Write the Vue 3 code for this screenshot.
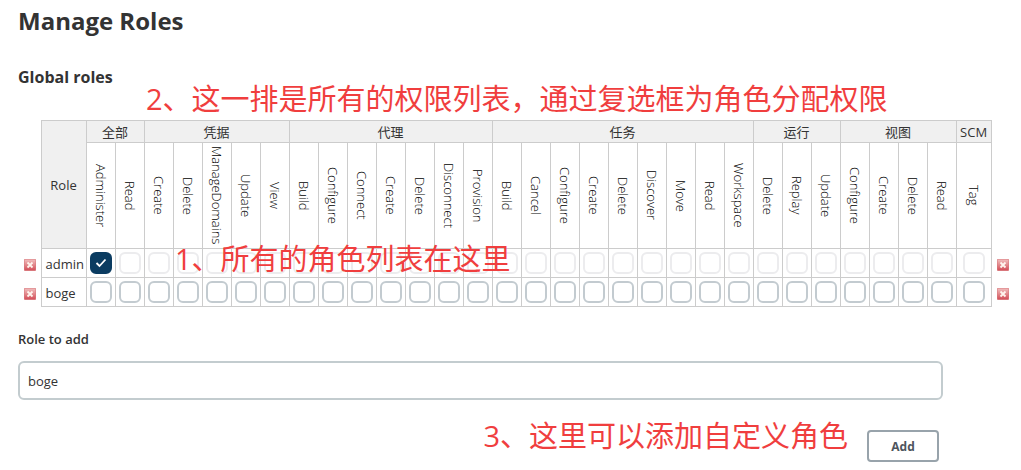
<script setup>
import { ref, reactive } from 'vue'

const groups = [
  { name: '全部', permissions: ['Administer', 'Read'] },
  { name: '凭据', permissions: ['Create', 'Delete', 'ManageDomains', 'Update', 'View'] },
  { name: '代理', permissions: ['Build', 'Configure', 'Connect', 'Create', 'Delete', 'Disconnect', 'Provision'] },
  { name: '任务', permissions: ['Build', 'Cancel', 'Configure', 'Create', 'Delete', 'Discover', 'Move', 'Read', 'Workspace'] },
  { name: '运行', permissions: ['Delete', 'Replay', 'Update'] },
  { name: '视图', permissions: ['Configure', 'Create', 'Delete', 'Read'] },
  { name: 'SCM', permissions: ['Tag'] },
]

const columns = groups.flatMap((g) =>
  g.permissions.map((p) => ({ key: g.name + '/' + p, label: p, wide: g.name === 'SCM' })),
)

const roles = reactive([
  { name: 'admin', granted: ['全部/Administer'] },
  { name: 'boge', granted: [] },
])

const newRole = ref('boge')

function implied(role, key) {
  return key !== '全部/Administer' && role.granted.includes('全部/Administer')
}

function removeRole(index) {
  roles.splice(index, 1)
}

function addRole() {
  const name = newRole.value.trim()
  if (name && !roles.some((r) => r.name === name)) roles.push({ name, granted: [] })
}
</script>

<template>
  <main class="page">
    <svg class="defs" width="0" height="0" aria-hidden="true">
      <defs>
        <linearGradient id="remove-fill" x1="0" y1="0" x2="0" y2="1">
          <stop offset="0" stop-color="#f0bcbc" />
          <stop offset="0.5" stop-color="#e28a8d" />
          <stop offset="1" stop-color="#d4505a" />
        </linearGradient>
        <symbol id="remove-icon" viewBox="0 0 12 12">
          <rect width="12" height="12" rx="1" fill="#d9777c" />
          <rect x="0.5" y="0.5" width="11" height="10.5" rx="1" fill="url(#remove-fill)" />
          <path d="M3.5 3.5 8.5 8.5M8.5 3.5 3.5 8.5" stroke="#fff5ee" stroke-width="1.8" />
        </symbol>
      </defs>
    </svg>
    <h1>Manage Roles</h1>
    <h2>Global roles</h2>

    <div class="matrix">
      <table>
        <colgroup>
          <col class="col-remove" />
          <col class="col-role" />
          <col v-for="c in columns" :key="c.key" :class="c.wide ? 'col-wide' : 'col-perm'" />
          <col class="col-remove" />
        </colgroup>
        <thead>
          <tr class="groups">
            <td class="blank" rowspan="2"></td>
            <th class="role-head" rowspan="2" scope="col">Role</th>
            <th v-for="g in groups" :key="g.name" class="group" :colspan="g.permissions.length" scope="colgroup">
              {{ g.name }}
            </th>
            <td class="blank" rowspan="2"></td>
          </tr>
          <tr class="permissions">
            <th v-for="c in columns" :key="c.key" scope="col"><span>{{ c.label }}</span></th>
          </tr>
        </thead>
        <tbody>
          <tr v-for="(role, i) in roles" :key="role.name">
            <td class="blank">
              <button type="button" class="remove" :aria-label="'Delete ' + role.name" @click="removeRole(i)">
                <svg width="12" height="12" aria-hidden="true"><use href="#remove-icon" /></svg>
              </button>
            </td>
            <th class="role" scope="row">{{ role.name }}</th>
            <td v-for="c in columns" :key="c.key" class="cell">
              <label class="check">
                <input
                  v-model="role.granted"
                  type="checkbox"
                  :value="c.key"
                  :disabled="implied(role, c.key)"
                  :aria-label="role.name + ' ' + c.key"
                />
                <svg viewBox="0 0 22 22" width="22" height="22" aria-hidden="true">
                  <path d="M6.5 11 9.5 14 15.5 7.5" fill="none" stroke="#fff" stroke-width="1.8" />
                </svg>
              </label>
            </td>
            <td class="blank last">
              <button type="button" class="remove" :aria-label="'Delete ' + role.name" @click="removeRole(i)">
                <svg width="12" height="12" aria-hidden="true"><use href="#remove-icon" /></svg>
              </button>
            </td>
          </tr>
        </tbody>
      </table>
      <p class="note note-permissions">2、这一排是所有的权限列表，通过复选框为角色分配权限</p>
      <p class="note note-roles">1、所有的角色列表在这里</p>
    </div>

    <form class="add" @submit.prevent="addRole">
      <label for="new-role">Role to add</label>
      <input id="new-role" v-model="newRole" type="text" />
      <div class="actions">
        <p class="note">3、这里可以添加自定义角色</p>
        <button type="submit">Add</button>
      </div>
    </form>
  </main>
</template>

<style>
body {
  margin: 0;
  background: #fff;
  overflow: hidden;
}
</style>

<style scoped>
.page {
  box-sizing: border-box;
  padding: 3px 0 0 18px;
  font-family: 'Open Sans', 'Noto Sans CJK SC', sans-serif;
  font-size: 13px;
  color: #333;
}

.defs {
  position: absolute;
}

h1,
h2,
p {
  margin: 0;
}

h1 {
  font-size: 24px;
  line-height: 36px;
  font-weight: 700;
}

h2 {
  margin-top: 26px;
  font-size: 16px;
  line-height: 24px;
  font-weight: 700;
}

.matrix {
  position: relative;
  margin-top: 31px;
}

table {
  border-collapse: collapse;
  table-layout: fixed;
  width: 996px;
}

.col-remove {
  width: 23px;
}

.col-role {
  width: 45px;
}

.col-perm {
  width: 29px;
}

.col-wide {
  width: 35px;
}

th,
td {
  box-sizing: border-box;
  padding: 0;
  border: 1px solid #ccc;
  font-weight: 400;
  text-align: center;
  vertical-align: middle;
}

.blank {
  border: 0;
}

.role-head,
.group {
  background: #f0f0f0;
}

.groups {
  height: 22px;
  line-height: 20px;
}

.permissions {
  height: 106px;
}

.permissions span {
  display: inline-block;
  writing-mode: vertical-rl;
  line-height: 28px;
  vertical-align: middle;
  font-weight: 300;
  color: #000;
}

tbody tr {
  height: 29px;
}

th.role {
  padding: 2px 0 0 4px;
  text-align: left;
}

.remove {
  display: block;
  margin: 4px 0 0 6px;
  padding: 0;
  border: 0;
  background: none;
  line-height: 0;
}

.last .remove {
  margin-left: 5px;
}

.check {
  position: relative;
  display: block;
  width: 22px;
  height: 22px;
  margin: 0 auto;
}

.check input {
  appearance: none;
  box-sizing: border-box;
  display: block;
  width: 22px;
  height: 22px;
  margin: 0;
  border: 2px solid #c3cbd0;
  border-radius: 6px;
  background: #fff;
}

.check input:disabled {
  border-color: #ececee;
}

.check input:checked {
  border-color: #0b3c61;
  background: #0b3c61;
}

.check svg {
  display: none;
  position: absolute;
  inset: 0;
  pointer-events: none;
}

.check input:checked + svg {
  display: block;
}

.note {
  font-size: 29px;
  line-height: 40px;
  color: #f03e3e;
  white-space: nowrap;
}

.note-permissions {
  position: absolute;
  left: 128px;
  top: -41px;
}

.note-roles {
  position: absolute;
  left: 157px;
  top: 119px;
}

.add {
  margin: 22px 78px 0 0;
}

.add label {
  display: block;
  font-weight: 600;
  line-height: 20px;
}

.add input {
  box-sizing: border-box;
  display: block;
  width: 100%;
  height: 39px;
  margin-top: 12px;
  padding: 0 8px;
  border: 2px solid #c3cccf;
  border-radius: 6px;
  background: #fff;
  font: inherit;
  color: #333;
}

.actions {
  display: flex;
  justify-content: flex-end;
  align-items: flex-start;
  gap: 19px;
  padding: 16px 4px 0 0;
}

.actions button {
  width: 72px;
  height: 32px;
  margin-top: 14px;
  padding: 0;
  border: 2px solid #98a3ab;
  border-radius: 4px;
  background: #fff;
  font: inherit;
  font-size: 12px;
  font-weight: 700;
  color: #4d545d;
}
</style>
